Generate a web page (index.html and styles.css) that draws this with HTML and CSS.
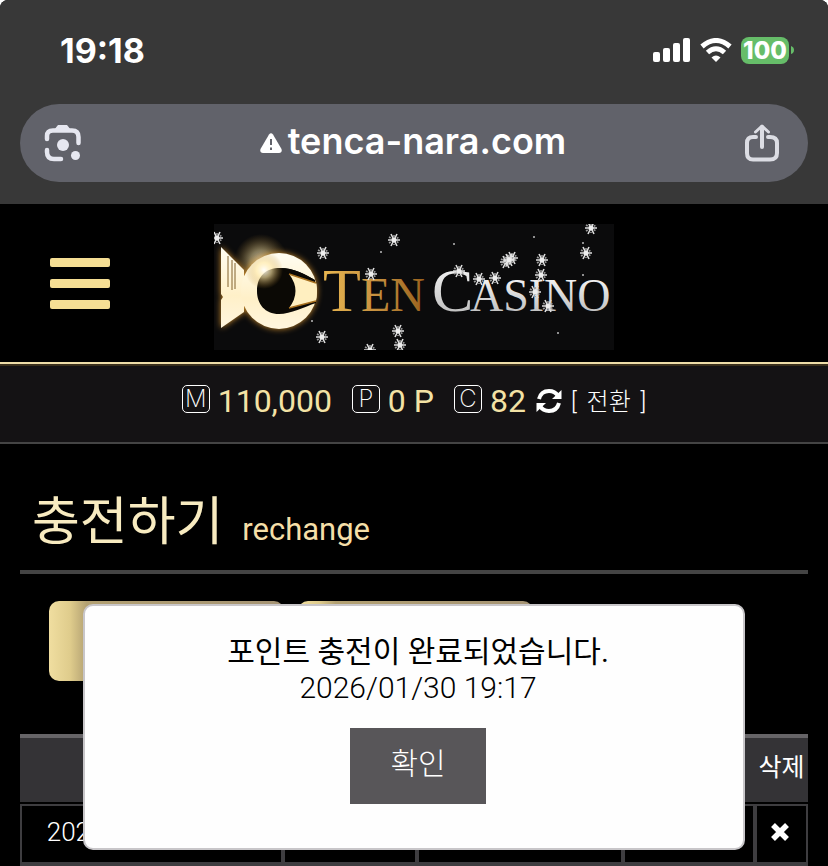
FILE: index.html
```
<!DOCTYPE html>
<html lang="ko">

<head>
    <meta charset="UTF-8">
    <meta name="viewport" content="width=device-width, initial-scale=1.0">
    <title>Ten Casino</title>
    <link rel="stylesheet" href="styles.css">
</head>

<body>
    <div class="page">
        <!-- phone browser -->
        <div class="browser">
            <div class="status">
                <span class="time">19:18</span>
                <div class="status-icons">
                    <svg width="38" height="24" viewBox="0 0 38 24" fill="#fff">
                        <rect x="0" y="14" width="7" height="10" rx="2" />
                        <rect x="10" y="10" width="7" height="14" rx="2" />
                        <rect x="20" y="5" width="7" height="19" rx="2" />
                        <rect x="30" y="0" width="7" height="24" rx="2" />
                    </svg>
                    <svg width="32" height="24" viewBox="0 0 32 24" fill="none" stroke="#fff" stroke-width="5">
                        <path d="M2 8.500Q16 -3.500 30 8.500" />
                        <path d="M7.500 14.500Q16 7 24.500 14.500" />
                        <path d="M11.500 19.500Q16 15.500 20.500 19.500L16 24Z" fill="#fff" stroke="none" />
                    </svg>
                    <span class="battery">100</span>
                    <svg class="battery-tip" width="3" height="8" viewBox="0 0 3 8">
                        <path d="M0 0Q3 1 3 4T0 8Z" fill="#66bd69" />
                    </svg>
                </div>
            </div>
            <div class="address">
                <button class="icon" type="button" aria-label="렌즈">
                    <svg width="38" height="38" viewBox="0 0 38 38" fill="none" stroke="#e6e7f0" stroke-width="4.500" stroke-linecap="round">
                        <path d="M3 15V12Q3 6.500 9 6.500H28Q34.500 6.500 34.500 13V19" />
                        <path d="M3 26V28Q3 35 10 35H17" />
                        <path d="M10 6L14 1H23L27 6Z" fill="#e6e7f0" stroke="none" />
                        <circle cx="19" cy="21" r="6" fill="#e6e7f0" stroke="none" />
                        <circle cx="31.500" cy="31.500" r="4.500" fill="#e6e7f0" stroke="none" />
                    </svg>
                </button>
                <button class="url" type="button">
                    <svg width="22" height="20" viewBox="0 0 22 20">
                        <path d="M9 1.500Q11 -1 13 1.500L21.500 16Q22.500 20 19 20H3Q-.5 20 .5 16Z" fill="#fff" />
                        <path d="M11 6V12M11 14.500V17" stroke="#61626a" stroke-width="2" />
                    </svg>
                    <span>tenca-nara.com</span>
                </button>
                <button class="icon" type="button" aria-label="공유">
                    <svg width="36" height="38" viewBox="0 0 36 38" fill="none" stroke="#dcdde4" stroke-width="4" stroke-linecap="round" stroke-linejoin="round">
                        <path d="M12 13H9Q3 13 3 19V29Q3 35.500 9 35.500H26Q33 35.500 33 29V19Q33 13 26 13H24" />
                        <path d="M18 23V3" />
                        <path d="M11.500 8L18 2L24.500 8" stroke-width="3" />
                    </svg>
                </button>
            </div>
        </div>

        <header class="top">
            <button class="menu" type="button" aria-label="메뉴">
                <i></i><i></i><i></i>
            </button>
            <a class="logo" href="#" aria-label="Ten Casino">
                <svg viewBox="0 0 400 126">
                    <defs>
                        <linearGradient id="gold" gradientUnits="userSpaceOnUse" x1="109" x2="212" y1="0" y2="0">
                            <stop offset="0" stop-color="#e8b650" />
                            <stop offset=".5" stop-color="#c89240" />
                            <stop offset="1" stop-color="#98611d" />
                        </linearGradient>
                        <linearGradient id="silver" x1="0" x2="0" y1="0" y2="1">
                            <stop offset="0" stop-color="#fff" />
                            <stop offset="1" stop-color="#b4b4b4" />
                        </linearGradient>
                        <linearGradient id="mark" x1="0" x2="0" y1="0" y2="1">
                            <stop offset="0" stop-color="#fffdf2" />
                            <stop offset=".6" stop-color="#fff0c8" />
                            <stop offset="1" stop-color="#fff6df" />
                        </linearGradient>
                        <radialGradient id="flare">
                            <stop offset="0" stop-color="#fff" />
                            <stop offset=".4" stop-color="#ffe9a8" stop-opacity=".7" />
                            <stop offset="1" stop-color="#b8862b" stop-opacity="0" />
                        </radialGradient>
                        <g id="flake" stroke="#dedede" stroke-width="1.600">
                            <path d="M-6 0H6M-3 -6L3 6M3 -6L-3 6" />
                            <path d="M-5 -3L5 3M-5 3L5 -3M0 -5V5" stroke="#9a9a9a" stroke-dasharray="2 1" />
                            <circle r="2.500" fill="#eee" stroke="none" />
                        </g>
                    </defs>
                    <rect width="400" height="126" fill="#0b0b0c" />
                    <circle cx="47" cy="37" r="27" fill="url(#flare)" opacity=".7" />
                    <g class="mark">
                        <path d="M7 23L30 46V88L7 104V76L9 73L7 70Z" fill="url(#mark)" />
                        <circle cx="65" cy="67" r="38" fill="url(#mark)" />
                    </g>
                    <path d="M14 32V63M18 36V66M21 39V65" stroke="#80602c" stroke-width="1" />
                    <path d="M43 67C43 52 52 44 66 44C80 44 90 50 101 56L102 79C90 83 77 90 65 90C51 90 43 80 43 67Z" fill="#0b0905" />
                    <path d="M66 44C80 44 90 50 101 56L75 50Z" fill="#0b0905" />
                    <path d="M75 50L102 59Q104 68 102 77L75 84Q88 67 75 50Z" fill="#ffefc0" />
                    <path d="M75 50L102 59M75 84L102 77" stroke="#a8701e" stroke-width="1.500" />
                    <circle cx="50" cy="46" r="19" fill="url(#flare)" opacity=".9" />
                    <g class="logo-text">
                        <text x="109" y="87" font-size="62" fill="url(#gold)">T</text>
                        <text x="147" y="87" font-size="48" fill="url(#gold)">EN</text>
                        <text x="218" y="87" font-size="62" fill="url(#silver)">C</text>
                        <text x="256" y="87" font-size="46" fill="url(#silver)">ASINO</text>
                    </g>
                    <use href="#flake" x="3" y="14" />
                    <use href="#flake" x="109" y="29" />
                    <use href="#flake" x="180" y="16" />
                    <use href="#flake" x="157" y="50" />
                    <use href="#flake" x="108" y="113" />
                    <use href="#flake" x="184" y="107" />
                    <use href="#flake" x="186" y="121" />
                    <use href="#flake" x="156" y="126" />
                    <use href="#flake" x="245" y="47" />
                    <use href="#flake" x="265" y="55" />
                    <use href="#flake" x="281" y="54" />
                    <use href="#flake" x="292" y="38" />
                    <use href="#flake" x="298" y="34" />
                    <use href="#flake" x="295" y="36" />
                    <use href="#flake" x="328" y="36" />
                    <use href="#flake" x="327" y="51" />
                    <use href="#flake" x="321" y="68" />
                    <use href="#flake" x="334" y="82" />
                    <use href="#flake" x="372" y="29" />
                    <use href="#flake" x="377" y="4" />
                    <g fill="#bbb">
                        <circle cx="240" cy="20" r="1" />
                        <circle cx="320" cy="13" r="1" />
                        <circle cx="369" cy="19" r="1" />
                        <circle cx="369" cy="51" r="1" />
                        <circle cx="344" cy="109" r="1" />
                        <circle cx="167" cy="28" r="1" />
                        <circle cx="98" cy="97" r="1" />
                    </g>
                </svg>
            </a>
        </header>

        <div class="wallet">
            <span class="money"><i class="badge">M</i>110,000</span>
            <span class="money"><i class="badge">P</i>0 P</span>
            <span class="money"><i class="badge">C</i>82</span>
            <button class="convert" type="button">
                <svg width="26" height="26" viewBox="0 0 26 26" fill="none" stroke="#fff" stroke-width="4">
                    <path d="M3 11Q5 3 13 3Q19 3 22 8" />
                    <path d="M23 15Q21 23 13 23Q7 23 4 18" />
                    <path d="M25.500 2V11H16Z" fill="#fff" stroke="none" />
                    <path d="M.5 24V15H10Z" fill="#fff" stroke="none" />
                </svg>
                <span class="bracket">[ <span>전환</span> ]</span>
            </button>
        </div>

        <main class="content">
            <h1>충전하기 <small>rechange</small></h1>
            <div class="tabs">
                <button type="button" aria-label="충전하기"></button>
                <button type="button" aria-label="충전내역"></button>
            </div>
            <table>
                <thead>
                    <tr>
                        <th class="col-date"></th>
                        <th class="col-type"></th>
                        <th class="col-amount"></th>
                        <th class="col-state"></th>
                        <th class="col-del">삭제</th>
                    </tr>
                </thead>
                <tbody>
                    <tr>
                        <td>2026/01/30 19:17</td>
                        <td></td>
                        <td></td>
                        <td></td>
                        <td>
                            <button class="delete" type="button" aria-label="삭제">
                                <svg width="18" height="18" viewBox="0 0 18 18" stroke="#fff" stroke-width="5.500">
                                    <path d="M2 2L16 16M16 2L2 16" />
                                </svg>
                            </button>
                        </td>
                    </tr>
                </tbody>
            </table>

            <div class="modal" role="dialog" aria-labelledby="msg">
                <p class="msg" id="msg">포인트 충전이 완료되었습니다.</p>
                <p class="date">2026/01/30 19:17</p>
                <button class="ok" type="button">확인</button>
            </div>
        </main>
    </div>
</body>

</html>
```

FILE: styles.css
```
* {
    box-sizing: border-box;
}

body {
    margin: 0;
    background: #fff;
    font-family: Roboto, "Noto Sans CJK KR", sans-serif;
    font-weight: 300;
}

button {
    border: none;
    padding: 0;
    background: none;
    color: inherit;
    font: inherit;
    cursor: pointer;
}

svg {
    display: block;
}

.page {
    min-height: 100vh;
    background: #000;
    color: #fff;
    border-radius: 8px 8px 0 0;
    overflow: hidden;
}

/* browser */
.browser {
    padding: 0 20px 22px;
    background: #383838;
    font-family: Inter, sans-serif;
}

.status {
    display: flex;
    align-items: center;
    justify-content: space-between;
    height: 104px;
    padding: 0 14px 4px 40px;
}

.time {
    font-size: 34px;
    font-weight: 700;
}

.status-icons {
    display: flex;
    align-items: center;
    gap: 9px;
}

.battery {
    width: 48px;
    border-radius: 8px;
    background: #66bd69;
    font-size: 24px;
    font-weight: 800;
    line-height: 27px;
    text-align: center;
}

.battery-tip {
    margin-left: -7px;
}

.address {
    display: flex;
    align-items: center;
    justify-content: space-between;
    height: 78px;
    padding: 0 28px 0 24px;
    border-radius: 39px;
    background: #61626a;
}

.url {
    display: flex;
    align-items: center;
    gap: 6px;
    font-size: 36px;
    font-weight: 600;
    line-height: 44px;
    padding-bottom: 4px;
}

.url svg {
    margin-top: 4px;
}

/* header */
.top {
    display: grid;
    grid-template-columns: 1fr 400px 1fr;
    align-items: center;
    padding: 20px 0 12px;
    border-bottom: 2px solid #eedda8;
}

.menu {
    display: flex;
    flex-direction: column;
    gap: 12px;
    width: 60px;
    margin-left: 50px;
    padding-bottom: 8px;
}

.menu i {
    height: 9px;
    border-radius: 2px;
    background: #f5de94;
}

.mark {
    filter: drop-shadow(0 0 3px #c98a2c);
}

.logo-text {
    font-family: "Liberation Serif", serif;
}

.wallet {
    display: flex;
    align-items: center;
    justify-content: center;
    height: 80px;
    padding-bottom: 6px;
    border-top: 2px solid #3a2f1c;
    border-bottom: 2px solid #444;
    background: #141214;
}

.money {
    display: flex;
    align-items: center;
    gap: 8px;
    margin-right: 20px;
    color: #f3e2a5;
    font-size: 32px;
    font-weight: 400;
}

.money:nth-of-type(3) {
    margin-right: 10px;
}

.badge {
    width: 28px;
    height: 28px;
    margin-bottom: 4px;
    border: 1px solid #fff;
    border-radius: 5px;
    color: #fff;
    font: 200 24px/26px Inter, sans-serif;
    display: flex;
    justify-content: center;
}

.convert {
    display: flex;
    align-items: center;
    gap: 9px;
    font-size: 24px;
}

.bracket {
    padding-bottom: 4px;
}

.bracket span {
    padding: 0 4px;
}

/* page */
.content {
    position: relative;
    padding: 0 20px;
}

h1 {
    margin: 0;
    padding: 41px 12px 0;
    height: 130px;
    border-bottom: 4px solid #444;
    color: #f8ebc0;
    font-size: 52px;
    font-weight: 400;
    line-height: 76px;
}

h1 small {
    margin-left: 6px;
    color: #f5dfa8;
    font-size: 31px;
}

.tabs {
    display: flex;
    gap: 14px;
    padding: 27px 29px 53px;
}

.tabs button {
    width: 235px;
    height: 80px;
    border-radius: 10px;
    background: linear-gradient(90deg, #f0dea0, #dfcc8c 9%, #b3a172 16%, #a59474);
}

table {
    width: 100%;
    table-layout: fixed;
    border-spacing: 0;
    font-size: 26px;
}

th {
    height: 70px;
    padding: 0 0 10px;
    border-top: 4px solid #666467;
    border-bottom: 2px solid #000;
    background: #343336;
    font-size: 25px;
    font-weight: 400;
}

td {
    height: 62px;
    padding: 0 4px 5px 0;
    border: 2px solid #3e3d40;
    border-bottom-width: 4px;
    text-align: center;
    white-space: nowrap;
}

.col-date {
    width: 263px;
}

.col-type {
    width: 134px;
}

.col-amount {
    width: 206px;
}

.col-state {
    width: 132px;
}

.delete {
    display: block;
    margin: 0 auto;
}

/* message */
.modal {
    position: absolute;
    top: 160px;
    left: 10%;
    right: 10%;
    padding: 28px 0 44px 8px;
    border: 2px solid #c8c6c9;
    border-radius: 10px;
    background: #fefefe;
    color: #000;
    font-size: 30px;
    line-height: 36px;
    text-align: center;
}

.modal p {
    margin: 0;
}

.modal .msg {
    font-weight: 400;
}

.ok {
    margin-top: 22px;
    padding-bottom: 4px;
    width: 136px;
    height: 76px;
    background: #585659;
    color: #fff;
}
```
